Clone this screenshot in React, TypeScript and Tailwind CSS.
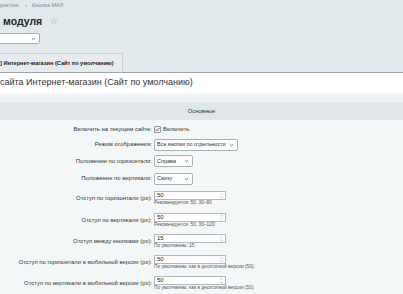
import React from "react";

const Chevron = () => (
  <svg width="5" height="4" viewBox="0 0 5 4" className="shrink-0">
    <path d="M0.8 1.2 L2.5 2.8 L4.2 1.2" fill="none" stroke="#555" strokeWidth="0.8" />
  </svg>
);

const Spinner = () => (
  <svg width="5" height="7" viewBox="0 0 5 7" className="shrink-0">
    <path d="M1 2.8 L2.5 1.2 L4 2.8" fill="none" stroke="#aaa" strokeWidth="0.6" />
    <path d="M1 4.2 L2.5 5.8 L4 4.2" fill="none" stroke="#aaa" strokeWidth="0.6" />
  </svg>
);

function Select({ text, w }: { text: string; w: string }) {
  return (
    <div
      className={`${w} h-[12px] flex items-center justify-between bg-white border border-[#a8b0b4] rounded-[2px] pl-[2px] pr-[3px] text-[5.5px] text-[#333]`}
    >
      <span className="whitespace-nowrap">{text}</span>
      <Chevron />
    </div>
  );
}

function NumInput({ value, hint }: { value: string; hint: string }) {
  return (
    <div className="flex flex-col">
      <div className="w-[72px] h-[9px] flex items-center justify-between bg-white border border-[#b0b8bc] pl-[2px] pr-[1px] text-[6px] text-[#222]">
        <span>{value}</span>
        <Spinner />
      </div>
      <div className="h-[6px] leading-[6px] text-[4.8px] text-[#555] whitespace-nowrap">{hint}</div>
    </div>
  );
}

function Row({ label, h, children }: { label: string; h: string; children: React.ReactNode }) {
  return (
    <div className={`flex items-center ${h}`}>
      <div className="w-[153px] pr-[1px] text-right text-[5.9px] text-[#333] whitespace-nowrap">{label}</div>
      <div className="pl-[1px] flex items-center">{children}</div>
    </div>
  );
}

export default function App() {
  return (
    <div className="w-[403px] h-[294px] overflow-hidden bg-[#e1e9ec] font-['Liberation_Sans',Arial,sans-serif] text-[#333]">
      {/* breadcrumb */}
      <div className="h-[11px] flex items-center text-[5.5px] text-[#7a8a96] whitespace-nowrap">
        <span>ректинг</span>
        <span className="ml-[6px]">›</span>
        <span className="ml-[5px]">Кнопка MAX</span>
      </div>
      {/* title */}
      <div className="h-[21px] flex items-center whitespace-nowrap">
        <span className="ml-[3px] text-[10.5px] font-bold text-[#222]">модуля</span>
        <span className="ml-[8px] text-[9px] text-[#8a959c]">☆</span>
      </div>
      {/* site select */}
      <div className="h-[11px] mt-[1px] -ml-[10px] w-[50px] bg-white border border-[#a8b0b4] rounded-[2px] flex items-center justify-end pr-[3px]">
        <Chevron />
      </div>
      {/* tab */}
      <div className="mt-[9px] h-[19px] w-[123px] bg-[#e5ebee] border-t border-r border-[#c7cfd2] flex items-center">
        <span className="text-[5.6px] font-bold text-[#222] whitespace-nowrap">] Интернет-магазин (Сайт по умолчанию)</span>
      </div>
      <div className="h-[1px] bg-[#9ea6a9]" />
      {/* white title */}
      <div className="h-[20px] bg-white flex items-center">
        <span className="text-[9px] text-[#333] whitespace-nowrap">сайта Интернет-магазин (Сайт по умолчанию)</span>
      </div>
      <div className="h-[10px] bg-gradient-to-b from-[#f3f6f7] to-[#e9eff1]" />
      {/* section header */}
      <div className="h-[17px] bg-[#dfe7ea] flex items-center justify-center text-[5.8px] text-[#333]">
        Основные
      </div>
      {/* form */}
      <div className="bg-[#f4f7f8] pt-[2px] h-[200px]">
        <Row label="Включить на текущем сайте:" h="h-[15px]">
          <div className="flex items-center">
            <div className="w-[7px] h-[7px] border border-[#8d969b] rounded-[1px] bg-[#eef2f4] flex items-center justify-center">
              <svg width="5" height="5" viewBox="0 0 5 5">
                <path d="M0.8 2.6 L2 3.8 L4.3 1" fill="none" stroke="#444" strokeWidth="0.9" />
              </svg>
            </div>
            <span className="ml-[2px] text-[5.9px] text-[#333]">Включить</span>
          </div>
        </Row>
        <Row label="Режим отображения:" h="h-[15px]">
          <Select text="Все кнопки по отдельности" w="w-[84px]" />
        </Row>
        <Row label="Положение по горизонтали:" h="h-[18px]">
          <Select text="Справа" w="w-[39px]" />
        </Row>
        <Row label="Положение по вертикали:" h="h-[17px]">
          <Select text="Снизу" w="w-[39px]" />
        </Row>
        <Row label="Отступ по горизонтали (px):" h="h-[22px]">
          <NumInput value="50" hint="Рекомендуется: 50, 30–80" />
        </Row>
        <Row label="Отступ по вертикали (px):" h="h-[22px]">
          <NumInput value="50" hint="Рекомендуется: 50, 30–120" />
        </Row>
        <Row label="Отступ между кнопками (px):" h="h-[21px]">
          <NumInput value="15" hint="По умолчанию: 15" />
        </Row>
        <Row label="Отступ по горизонтали в мобильной версии (px):" h="h-[21px]">
          <NumInput value="50" hint="По умолчанию: как в десктопной версии (50)." />
        </Row>
        <Row label="Отступ по вертикали в мобильной версии (px):" h="h-[21px]">
          <NumInput value="50" hint="По умолчанию: как в десктопной версии (50)." />
        </Row>
      </div>
    </div>
  );
}
